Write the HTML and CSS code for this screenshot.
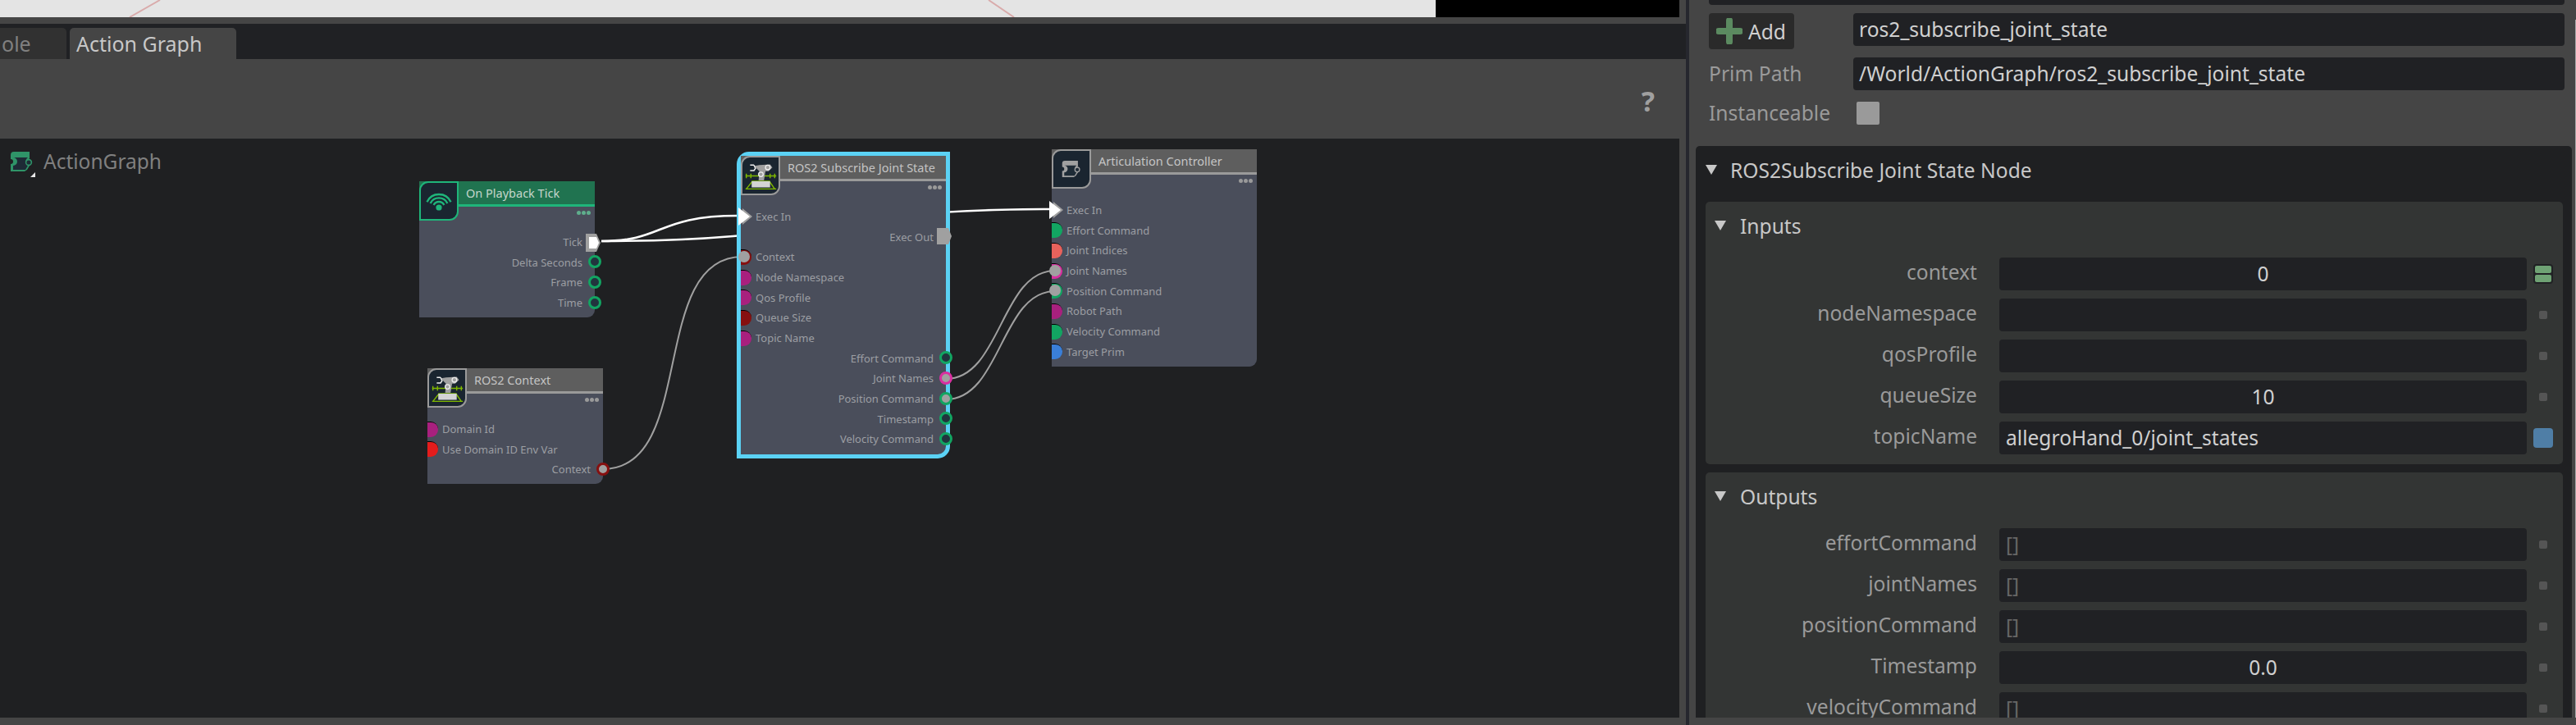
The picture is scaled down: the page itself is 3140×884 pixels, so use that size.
FILE: index.html
```html
<!DOCTYPE html>
<html lang="en">
<head>
    <meta charset="UTF-8">
    <title>Action Graph</title>
    <link rel="stylesheet" href="styles.css">
</head>
<body>
    <svg class="defs" width="0" height="0">
        <symbol id="robot" viewBox="0 0 47 47">
            <path d="M4 24h40M5 21v6M11 21v6M36 21v6M42 21v6M12 31h24M13 31L5 41M35 31l7 10M4 41h40" fill="none" stroke="#7fb800" stroke-width="1.5"/>
            <path d="M16 11l6-1 14-1 3 4-5 5-4 0-2 12h-7l1-12-3-3z" fill="#a0a0a0"/>
            <path d="M15 10h-5M10 17h5l2-3-2-4" fill="none" stroke="#eee" stroke-width="1.6"/>
            <circle cx="33" cy="13" r="3" fill="#a0a0a0" stroke="#eee" stroke-width="1.4"/>
            <circle cx="24" cy="22" r="3" fill="#a0a0a0" stroke="#eee" stroke-width="1.4"/>
            <rect x="12" y="31" width="24" height="8" fill="#d4d4d4"/>
        </symbol>
        <symbol id="graph-glyph" viewBox="0 0 27 24">
            <path d="M4 0h19v8a5 5 0 0 0 0 8v1l-3 5-3 2H0v-9a3 3 0 0 0 0-6V4a4 4 0 0 1 4-4z" fill="currentColor"/>
            <path d="M3 7h18a6 6 0 0 0 0 10l-3 5H3v-5a5 5 0 0 0 0-10z" fill="#1e2b36"/>
            <circle cx="22" cy="13" r="3.4" fill="#1e2b36" stroke="currentColor" stroke-width="1.6"/>
        </symbol>
    </svg>

    <div class="app">
        <div class="left">
            <div class="viewport">
                <div class="viewport-scene">
                    <svg class="scene-lines" width="1750" height="21">
                        <path d="M195 0L158 21M1205 0L1236 21" stroke="#d9abab" stroke-width="2"/>
                    </svg>
                </div>
                <div class="viewport-black"></div>
            </div>
            <div class="tabbar">
                <div class="tab tab-off"><span class="tab-clip">ole</span></div>
                <div class="tab tab-on">Action Graph</div>
            </div>
            <div class="toolbar"><span class="help">?</span></div>
            <div class="canvas">
                <div class="crumb">
                    <svg class="crumb-icon" width="27" height="24"><use href="#graph-glyph"/></svg>
                    <span class="crumb-corner"></span>
                    <span>ActionGraph</span>
                </div>

                <svg class="wires" width="2047" height="706">
                    <g class="wire-white">
                        <path d="M733 125C810 125 800 94 900 94"/>
                        <path d="M733 125C1000 125 1013 86 1280 86"/>
                    </g>
                    <g class="wire-gray">
                        <path d="M735 403C850 403 790 144 905 144"/>
                        <path d="M1153 293C1220 293 1220 161 1286 161"/>
                        <path d="M1153 318C1220 318 1220 186 1286 186"/>
                    </g>
                </svg>

                <div class="node node-tick accent-green">
                    <div class="node-icon">
                        <svg width="44" height="43" viewBox="0 0 44 43" class="wifi">
                            <path d="M15.7 26a7 7 0 0 1 12.6 0M11.6 24a11.5 11.5 0 0 1 20.8 0M7.5 22.2a16 16 0 0 1 29 0"/>
                            <circle cx="22" cy="29" r="3.6"/>
                        </svg>
                    </div>
                    <div class="node-title">On Playback Tick</div>
                    <div class="node-dots"><i></i><i></i><i></i></div>
                    <div class="ports">
                        <div class="row row-out">Tick
                            <svg class="exec-out" width="20" height="24" viewBox="0 0 20 24">
                                <path d="M1 1h13l5 11-5 11H1z" fill="#a0a0a0"/>
                                <path d="M5 5h9l3 7-3 7H5z" fill="#fff"/>
                            </svg>
                        </div>
                        <div class="row row-out">Delta Seconds<span class="port-out ring-green"></span></div>
                        <div class="row row-out">Frame<span class="port-out ring-green"></span></div>
                        <div class="row row-out">Time<span class="port-out ring-green"></span></div>
                    </div>
                </div>

                <div class="node node-context">
                    <div class="node-icon"><svg width="44" height="44"><use href="#robot"/></svg></div>
                    <div class="node-title">ROS2 Context</div>
                    <div class="node-dots"><i></i><i></i><i></i></div>
                    <div class="ports">
                        <div class="row row-in"><span class="port-in fill-magenta"></span>Domain Id</div>
                        <div class="row row-in"><span class="port-in fill-red"></span>Use Domain ID Env Var</div>
                        <div class="row row-out">Context<span class="port-out ring-darkred dot-gray"></span></div>
                    </div>
                </div>

                <div class="node node-sub">
                    <div class="node-icon"><svg width="44" height="44"><use href="#robot"/></svg></div>
                    <div class="node-title">ROS2 Subscribe Joint State</div>
                    <div class="node-dots"><i></i><i></i><i></i></div>
                    <div class="ports">
                        <div class="row row-in">
                            <svg class="exec-in" width="18" height="22" viewBox="0 0 18 22">
                                <path d="M5 1l12 10L5 21z" fill="#a0a0a0"/>
                                <path d="M0 0l14 11L0 22z" fill="#fff"/>
                            </svg>Exec In</div>
                        <div class="row row-out">Exec Out
                            <svg class="exec-out" width="20" height="22" viewBox="0 0 20 22">
                                <path d="M1 1h14l4 10-4 10H1z" fill="#a0a0a0"/>
                            </svg>
                        </div>
                        <div class="row row-in"><span class="port-in fill-darkred"><b class="port-dot"></b></span>Context</div>
                        <div class="row row-in"><span class="port-in fill-magenta"></span>Node Namespace</div>
                        <div class="row row-in"><span class="port-in fill-magenta"></span>Qos Profile</div>
                        <div class="row row-in"><span class="port-in fill-darkred"></span>Queue Size</div>
                        <div class="row row-in"><span class="port-in fill-magenta"></span>Topic Name</div>
                        <div class="row row-out">Effort Command<span class="port-out ring-green"></span></div>
                        <div class="row row-out">Joint Names<span class="port-out ring-pink dot-gray"></span></div>
                        <div class="row row-out">Position Command<span class="port-out ring-green dot-gray"></span></div>
                        <div class="row row-out">Timestamp<span class="port-out ring-green"></span></div>
                        <div class="row row-out">Velocity Command<span class="port-out ring-green"></span></div>
                    </div>
                </div>

                <div class="node node-artic">
                    <div class="node-icon">
                        <svg class="artic-glyph" width="24" height="20"><use href="#graph-glyph"/></svg>
                    </div>
                    <div class="node-title">Articulation Controller</div>
                    <div class="node-dots"><i></i><i></i><i></i></div>
                    <div class="ports">
                        <div class="row row-in">
                            <svg class="exec-in" width="18" height="22" viewBox="0 0 18 22">
                                <path d="M5 1l12 10L5 21z" fill="#a0a0a0"/>
                                <path d="M0 0l14 11L0 22z" fill="#fff"/>
                            </svg>Exec In</div>
                        <div class="row row-in"><span class="port-in fill-green"></span>Effort Command</div>
                        <div class="row row-in"><span class="port-in fill-salmon"></span>Joint Indices</div>
                        <div class="row row-in"><span class="port-in fill-pink"><b class="port-dot"></b></span>Joint Names</div>
                        <div class="row row-in"><span class="port-in fill-green"><b class="port-dot"></b></span>Position Command</div>
                        <div class="row row-in"><span class="port-in fill-magenta"></span>Robot Path</div>
                        <div class="row row-in"><span class="port-in fill-green"></span>Velocity Command</div>
                        <div class="row row-in"><span class="port-in fill-blue"></span>Target Prim</div>
                    </div>
                </div>
            </div>
        </div>

        <div class="divider"></div>

        <div class="panel">
            <div class="panel-stub"></div>
            <div class="prim-row prim-add">
                <div class="add-btn">
                    <svg width="32" height="32" viewBox="0 0 32 32"><path d="M16 3v26M3 16h26" stroke="#5b8a60" stroke-width="8" stroke-linecap="round"/></svg>
                    <span>Add</span>
                </div>
                <div class="field name-field">ros2_subscribe_joint_state</div>
            </div>
            <div class="prim-row">
                <div class="prim-label">Prim Path</div>
                <div class="field name-field">/World/ActionGraph/ros2_subscribe_joint_state</div>
            </div>
            <div class="prim-row prim-check">
                <div class="prim-label">Instanceable</div>
                <div class="checkbox"></div>
            </div>

            <div class="section">
                <div class="section-head"><span class="tri"></span>ROS2Subscribe Joint State Node</div>

                <div class="group">
                    <div class="group-head"><span class="tri"></span>Inputs</div>
                    <div class="attr">
                        <div class="attr-label">context</div>
                        <div class="field value">0</div>
                        <div class="mark mark-conn"><i></i><i></i></div>
                    </div>
                    <div class="attr">
                        <div class="attr-label">nodeNamespace</div>
                        <div class="field"></div>
                        <div class="mark"><i></i></div>
                    </div>
                    <div class="attr">
                        <div class="attr-label">qosProfile</div>
                        <div class="field"></div>
                        <div class="mark"><i></i></div>
                    </div>
                    <div class="attr">
                        <div class="attr-label">queueSize</div>
                        <div class="field value">10</div>
                        <div class="mark"><i></i></div>
                    </div>
                    <div class="attr">
                        <div class="attr-label">topicName</div>
                        <div class="field text">allegroHand_0/joint_states</div>
                        <div class="mark mark-blue"><i></i></div>
                    </div>
                </div>

                <div class="group">
                    <div class="group-head"><span class="tri"></span>Outputs</div>
                    <div class="attr">
                        <div class="attr-label">effortCommand</div>
                        <div class="field empty">[]</div>
                        <div class="mark"><i></i></div>
                    </div>
                    <div class="attr">
                        <div class="attr-label">jointNames</div>
                        <div class="field empty">[]</div>
                        <div class="mark"><i></i></div>
                    </div>
                    <div class="attr">
                        <div class="attr-label">positionCommand</div>
                        <div class="field empty">[]</div>
                        <div class="mark"><i></i></div>
                    </div>
                    <div class="attr">
                        <div class="attr-label">Timestamp</div>
                        <div class="field value">0.0</div>
                        <div class="mark"><i></i></div>
                    </div>
                    <div class="attr">
                        <div class="attr-label">velocityCommand</div>
                        <div class="field empty">[]</div>
                        <div class="mark"><i></i></div>
                    </div>
                </div>
            </div>
            <div class="scroll-line"></div>
        </div>
    </div>
</body>
</html>
```

FILE: styles.css
```css
html, body {
    margin: 0;
    height: 884px;
    overflow: hidden;
    background: #454545;
    font-family: "Noto Sans", sans-serif;
}

.defs {
    position: absolute;
}

.app {
    display: flex;
    width: 3140px;
    height: 884px;
}

/* left side: viewport strip, tabs, graph editor */
.left {
    display: flex;
    flex-direction: column;
    width: 2055px;
    height: 875px;
}

.viewport {
    display: flex;
    height: 21px;
    margin-right: 8px;
    margin-bottom: 8px;
}

.viewport-scene {
    width: 1750px;
    background: #e4e4e4;
}

.scene-lines {
    display: block;
}

.viewport-black {
    flex: 1;
    background: #000;
}

.tabbar {
    display: flex;
    align-items: flex-end;
    gap: 4px;
    height: 43px;
    background: #202124;
}

.tab {
    height: 38px;
    line-height: 38px;
    font-size: 25px;
    border-radius: 5px 5px 0 0;
}

.tab-off {
    width: 81px;
    background: #313131;
    color: #808080;
    border-top-left-radius: 0;
}

.tab-clip {
    padding-left: 2px;
}

.tab-on {
    width: 203px;
    padding-left: 8px;
    box-sizing: border-box;
    background: #454545;
    color: #c8c8c8;
}

.toolbar {
    display: flex;
    justify-content: flex-end;
    align-items: center;
    height: 97px;
    padding-right: 38px;
    padding-top: 4px;
    box-sizing: border-box;
}

.help {
    font-size: 34px;
    font-weight: 700;
    color: #a0a0a0;
}

.canvas {
    position: relative;
    flex: 1;
    margin-right: 8px;
    background: #1f2022;
    overflow: hidden;
}

.crumb {
    position: absolute;
    left: 13px;
    top: 11px;
    display: flex;
    align-items: center;
    gap: 13px;
    color: #808080;
    font-size: 24.5px;
}

.crumb-icon {
    color: #2f9468;
}

.crumb-corner {
    position: absolute;
    left: 24px;
    top: 30px;
    width: 6px;
    height: 6px;
    background: #e8e8e8;
    clip-path: polygon(100% 0, 100% 100%, 0 100%);
}

.wires {
    position: absolute;
    left: 0;
    top: 0;
    fill: none;
}

.wire-white {
    stroke: #fff;
    stroke-width: 2.5;
}

.wire-gray {
    stroke: #a0a0a0;
    stroke-width: 2;
}

/* graph nodes */
.node {
    position: absolute;
    background: #4a4e5b;
    color: #9c9ea3;
    font-size: 13px;
    border-bottom-right-radius: 9px;
    --accent: #9a9a9a;
    --title-bg: #5e5e5e;
    --title-fg: #c4c4c4;
}

.accent-green {
    --accent: #1fb57a;
    --title-bg: #207350;
    --title-fg: #c5d6cc;
}

.node-tick {
    left: 511px;
    top: 52px;
    width: 214px;
    height: 166px;
}

.node-context {
    left: 521px;
    top: 280px;
    width: 214px;
    height: 141px;
}

.node-sub {
    left: 898px;
    top: 16px;
    width: 250px;
    height: 364px;
    border: 5px solid #5bd2f5;
    border-radius: 15px 0 15px 0;
}

.node-artic {
    left: 1282px;
    top: 13px;
    width: 250px;
    height: 265px;
}

.node-icon {
    position: absolute;
    left: 0;
    top: 0;
    z-index: 1;
    width: 44px;
    height: 44px;
    display: flex;
    align-items: center;
    justify-content: center;
    background: #1a2530;
    border: 2px solid var(--accent);
    border-radius: 11px 0 11px 0;
}

.artic-glyph {
    color: #a0a0a0;
}

.wifi path {
    fill: none;
    stroke: #1fb57a;
    stroke-width: 2.4;
}

.wifi circle {
    fill: #1fb57a;
}

.node-title {
    height: 28px;
    padding-left: 57px;
    line-height: 28px;
    font-size: 14.5px;
    color: var(--title-fg);
    background: var(--title-bg);
    border-bottom: 3px solid var(--accent);
}

.node-dots {
    display: flex;
    justify-content: flex-end;
    gap: 1px;
    padding: 5px 5px 0 0;
}

.node-dots i {
    width: 5px;
    height: 5px;
    border-radius: 50%;
    background: #9a9a9a;
}

.accent-green .node-dots i {
    background: #5fae8c;
}

.ports {
    display: flex;
    flex-direction: column;
    margin-top: 20.67px;
}

.row {
    position: relative;
    display: flex;
    align-items: center;
    height: 24.67px;
    white-space: nowrap;
}

.row-in {
    padding-left: 18px;
}

.row-out {
    justify-content: flex-end;
    padding-right: 15px;
}

.port-in {
    position: absolute;
    left: 0;
    top: 3px;
    width: 13px;
    height: 18px;
    border-top: 1px solid #000;
    border-radius: 0 9px 9px 0;
}

.fill-magenta { background: #a8207e; }
.fill-red { background: #e41c1c; }
.fill-darkred { background: #861010; }
.fill-green { background: #12a562; }
.fill-salmon { background: #e8625c; }
.fill-pink { background: #d92fa0; }
.fill-blue { background: #3a7fd8; }

.port-dot {
    position: absolute;
    left: -3px;
    top: 1px;
    width: 14px;
    height: 14px;
    border-radius: 50%;
    background: #a0a0a0;
}

.port-out {
    position: absolute;
    right: -8px;
    top: 4px;
    width: 16px;
    height: 16px;
    box-sizing: border-box;
    border: 3px solid;
    border-radius: 50%;
    background: #22343e;
}

.ring-green { border-color: #12a562; }
.ring-pink { border-color: #d92fa0; }
.ring-darkred { border-color: #861010; }
.dot-gray { background: #a0a0a0; }

.exec-out {
    position: absolute;
    right: -8px;
    top: 1px;
}

.exec-in {
    position: absolute;
    left: -3px;
    top: 1px;
}

/* property panel */
.divider {
    width: 4px;
    background: #26272e;
    flex: none;
}

.panel {
    position: relative;
    width: 1081px;
    height: 875px;
    overflow: hidden;
    flex: none;
    font-size: 24.6px;
}

.scroll-line {
    position: absolute;
    right: 0;
    top: 24px;
    bottom: 0;
    width: 1px;
    background: #a8a8a8;
}

.panel-stub {
    height: 6px;
    margin: 0 14px 10px 24px;
    background: #202124;
    border-radius: 0 0 4px 4px;
}

.prim-row {
    display: flex;
    align-items: center;
    height: 40px;
    margin: 0 14px 14px 24px;
}

.prim-add {
    align-items: flex-start;
}

.prim-check {
    height: 28px;
    margin-bottom: 26px;
}

.prim-label {
    width: 176px;
    flex: none;
    margin-top: -2px;
    color: #9a9a9a;
}

.add-btn {
    display: flex;
    align-items: center;
    gap: 7px;
    width: 104px;
    height: 44px;
    margin-right: 72px;
    padding-left: 9px;
    box-sizing: border-box;
    flex: none;
    background: #2a2a2a;
    border-radius: 4px;
    color: #d0d0d0;
}

.field {
    flex: 1;
    height: 40px;
    line-height: 40px;
    background: #202124;
    border-radius: 4px;
    color: #d0d0d0;
    white-space: nowrap;
    overflow: hidden;
}

.name-field {
    padding-left: 7px;
}

.checkbox {
    width: 28px;
    height: 28px;
    margin-left: 4px;
    background: #9a9a9a;
    border-radius: 2px;
}

.section {
    margin: 0 5px 0 8px;
    padding: 0 11px 0 12px;
    height: 697px;
    background: #1f2022;
    border-radius: 5px 5px 0 0;
    overflow: hidden;
}

.section-head {
    display: flex;
    align-items: center;
    height: 58px;
    margin-bottom: 10px;
    color: #c8c8c8;
}

.tri {
    width: 14px;
    height: 12px;
    background: #c8c8c8;
    clip-path: polygon(0 0, 100% 0, 50% 100%);
}

.section-head .tri {
    margin-right: 16px;
}

.group {
    margin-bottom: 10px;
    padding-bottom: 2px;
    background: #333534;
    border-radius: 5px;
}

.group-head {
    display: flex;
    align-items: center;
    height: 58px;
    margin-bottom: 10px;
    padding-left: 11px;
    color: #c8c8c8;
}

.group-head .tri {
    margin-right: 17px;
}

.attr {
    display: grid;
    grid-template-columns: 331px 670px 40px;
    align-items: center;
    height: 40px;
    margin-bottom: 10px;
}

.attr-label {
    height: 40px;
    line-height: 35px;
    color: #9a9a9a;
    text-align: right;
}

.attr .field {
    margin-left: 27px;
}

.value {
    text-align: center;
}

.text {
    padding-left: 8px;
}

.empty {
    padding-left: 8px;
    color: #666;
}

.mark {
    display: flex;
    justify-content: center;
    align-items: center;
    height: 24px;
}

.mark i {
    width: 10px;
    height: 10px;
    background: #555;
    border-radius: 2px;
}

.mark-conn {
    flex-direction: column;
    gap: 2px;
    width: 24px;
    height: 24px;
    margin-left: 8px;
    background: #202124;
    border-radius: 4px;
}

.mark-conn i {
    width: 20px;
    height: 9px;
    background: #6fa274;
}

.mark-blue i {
    width: 24px;
    height: 24px;
    background: #4f7ea6;
    border-radius: 4px;
}
```
